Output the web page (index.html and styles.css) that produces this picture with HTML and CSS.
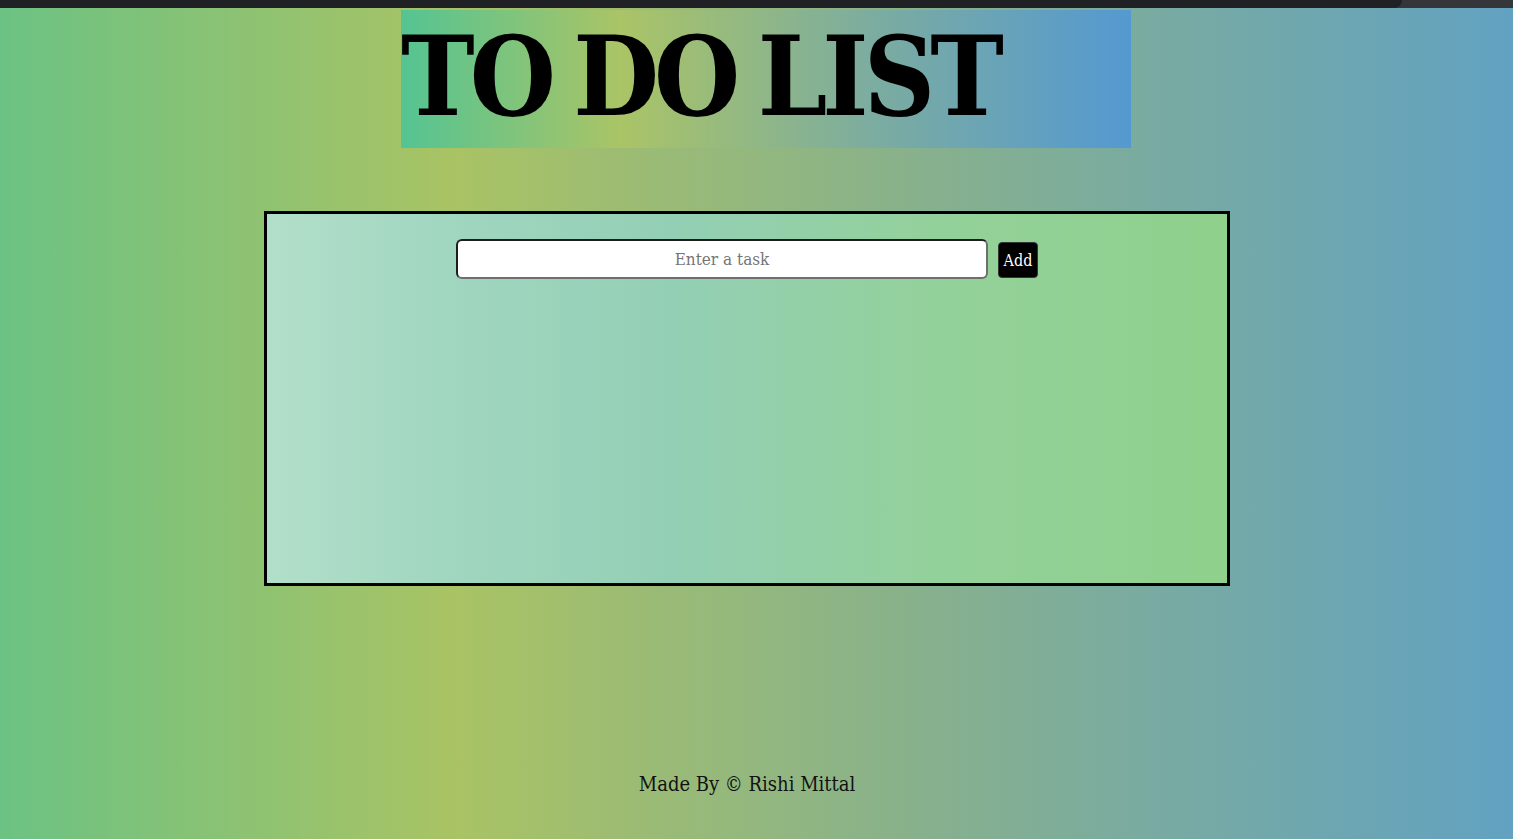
FILE: index.html
```html
<!DOCTYPE html>
<html lang="en">
<head>
<meta charset="utf-8">
<title>To Do List</title>
<link rel="stylesheet" href="styles.css">
</head>
<body>
<div class="chrome"><div class="chrome-tab"></div><div class="chrome-rest"></div></div>
<main class="page">
  <header class="banner"><h1 class="title">TO DO LIST</h1></header>
  <section class="card">
    <form class="entry" onsubmit="return false">
      <input class="task-input" type="text" placeholder="Enter a task">
      <button class="add-btn" type="submit">Add</button>
    </form>
    <ul class="tasks"></ul>
  </section>
  <footer class="footer">Made By © Rishi Mittal</footer>
</main>
</body>
</html>
```
FILE: styles.css
```css
* { box-sizing: border-box; }
html, body { margin: 0; padding: 0; }
body {
  width: 1513px;
  height: 839px;
  overflow: hidden;
  font-family: "DejaVu Serif", serif;
  font-stretch: condensed;
}
.chrome { display: flex; height: 8px; background: #35363a; }
.chrome-tab { flex: 0 0 1402px; background: #202124; border-bottom-right-radius: 8px; }
.chrome-rest { flex: 1; }
.page {
  width: 1513px;
  height: 831px;
  display: flex;
  flex-direction: column;
  align-items: flex-start;
  background: linear-gradient(to right, #6cc283 0%, #a9c364 30%, #86b08e 62%, #62a2c1 100%);
}
.banner {
  margin: 2px 0 0 401px;
  width: 730px;
  height: 138px;
  background: linear-gradient(to right, #54c493 0%, #aac466 30%, #7fae9c 62%, #5499d1 100%);
}
.title {
  margin: 0;
  font-family: "DejaVu Serif", serif;
  font-weight: bold;
  font-size: 110px;
  line-height: 1;
  letter-spacing: -5px;
  word-spacing: -7px;
  color: #000;
  padding-top: 12px;
  white-space: nowrap;
}
.card {
  margin: 63px 0 0 264px;
  width: 966px;
  height: 375px;
  border: 3px solid #000;
  background: linear-gradient(to right, #b2dfca 0%, #a1d6c0 18%, #93cfb5 42%, #93d19a 70%, #8fd08c 100%);
  display: flex;
  flex-direction: column;
  align-items: center;
  padding-top: 25px;
}
.entry { display: flex; align-items: center; gap: 10px; margin: 0; }
.task-input {
  width: 532px;
  height: 40px;
  border: 2px solid #1e1e1e;
  border-right-color: #6f6f6f;
  border-bottom-color: #6f6f6f;
  border-radius: 6px;
  background: #fff;
  text-align: center;
  font-family: "DejaVu Serif", serif;
  font-stretch: condensed;
  font-size: 17px;
  outline: none;
}
.task-input::placeholder { color: #767676; }
.add-btn {
  width: 40px;
  height: 36px;
  margin-top: 2px;
  padding: 0;
  border: 1px solid #333;
  border-radius: 4px;
  background: #000;
  color: #fff;
  font-family: "DejaVu Serif", serif;
  font-stretch: condensed;
  font-size: 16px;
}
.tasks { margin: 0; padding: 0; list-style: none; }
.footer {
  margin: 186px 0 0 0;
  width: 1494px;
  text-align: center;
  font-size: 20px;
  color: #111;
}
```
